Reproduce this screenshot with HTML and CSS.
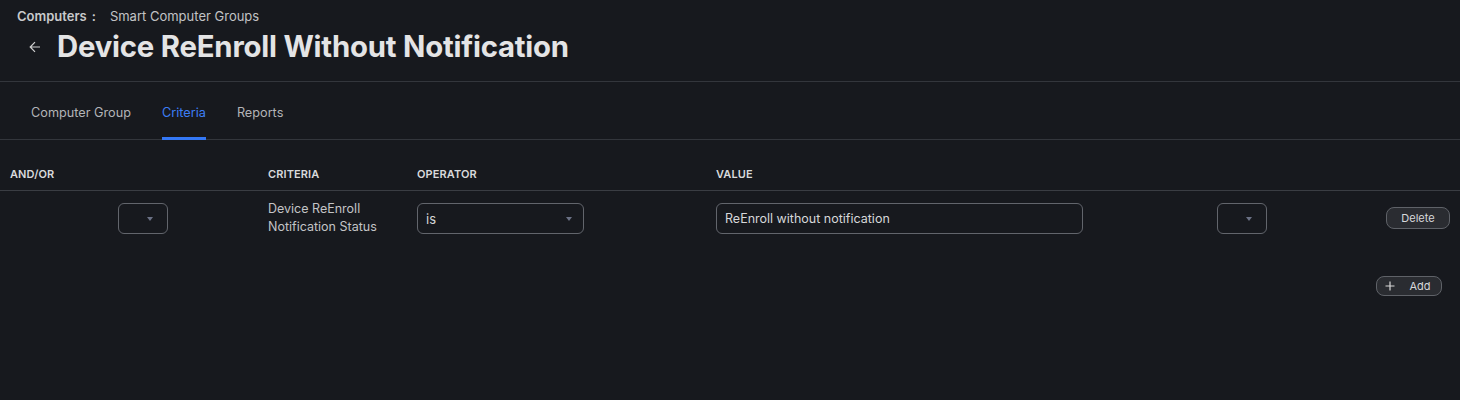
FILE: index.html
```html
<!DOCTYPE html>
<html>
<head>
<meta charset="utf-8">
<link rel="stylesheet" href="styles.css">
</head>
<body>
<header class="page-head">
  <nav class="crumbs"><span class="crumb-main">Computers</span><span class="crumb-sep">:</span><span class="crumb-sub">Smart Computer Groups</span></nav>
  <div class="title-row">
    <svg class="back" width="14" height="14" viewBox="0 0 14 14"><path d="M12 7H2.5M7 2.2L2.2 7 7 11.8" fill="none" stroke="#d0d0d0" stroke-width="1.2"/></svg>
    <h1 class="title">Device ReEnroll Without Notification</h1>
  </div>
</header>
<div class="tabs">
  <span class="tab">Computer Group</span>
  <span class="tab active">Criteria</span>
  <span class="tab">Reports</span>
</div>
<section class="table">
  <div class="thead">
    <div class="th span2">AND/OR</div>
    <div class="th">CRITERIA</div>
    <div class="th">OPERATOR</div>
    <div class="th">VALUE</div>
    <div class="th"></div>
    <div class="th"></div>
  </div>
  <div class="trow">
    <div class="td"></div>
    <div class="td"><div class="select small"><span class="caret"></span></div></div>
    <div class="td crit">Device ReEnroll<br>Notification Status</div>
    <div class="td"><div class="select op"><span class="val">is</span><span class="caret"></span></div></div>
    <div class="td"><div class="input">ReEnroll without notification</div></div>
    <div class="td"><div class="select small"><span class="caret"></span></div></div>
    <div class="td"><button class="btn del">Delete</button></div>
  </div>
  <div class="tfoot">
    <button class="btn add"><svg width="10" height="10" viewBox="0 0 10 10"><path d="M5 0.5v9M0.5 5h9" stroke="#d8d8d8" stroke-width="1.2"/></svg><span>Add</span></button>
  </div>
</section>
</body>
</html>
```
FILE: styles.css
```css
* { box-sizing: border-box; }
html, body { margin: 0; padding: 0; }
body {
  background: #17191e;
  color: #d4d5d7;
  font-family: Inter, "Noto Sans", sans-serif;
  width: 1460px;
  height: 400px;
  overflow: hidden;
}
.page-head {
  padding: 7px 0 0 17px;
  height: 82px;
  border-bottom: 1px solid #33363c;
}
.crumbs { font-size: 13px; line-height: 18px; display: flex; align-items: center; }
.crumb-main { font-weight: 600; color: #c9cacc; }
.crumb-sep { color: #c9cacc; margin: 0 14px 0 5px; font-weight: 600; }
.crumb-sub { color: #c2c3c5; }
.title-row { display: flex; align-items: center; margin-top: 9px; padding-left: 11px; }
.back { margin-right: 15px; }
.title {
  margin: 0;
  font-size: 29.3px;
  line-height: 26px;
  font-weight: 700;
  color: #e4e4e5;
  letter-spacing: -0.2px;
}
.tabs {
  display: flex;
  height: 58px;
  padding-left: 31px;
  gap: 31px;
  border-bottom: 1px solid #33363c;
}
.tab {
  font-size: 12.7px;
  color: #b3b4b7;
  display: flex;
  align-items: center;
  padding-top: 4px;
  position: relative;
}
.tab.active { color: #3d7ef5; }
.tab.active::after {
  content: "";
  position: absolute;
  left: 0; right: 0; bottom: -1px;
  height: 3px;
  background: #3478f6;
}
.table { margin-top: 17px; }
.thead, .trow {
  display: grid;
  grid-template-columns: 108px 150px 149px 299px 501px 169px 1fr;
}
.thead { height: 34px; border-bottom: 1px solid #3a3d43; }
.th {
  font-size: 11px;
  font-weight: 600;
  color: #d9dadc;
  padding-left: 10px;
  display: flex;
  align-items: center;
  letter-spacing: 0.1px;
}
.span2 { grid-column: span 2; }
.trow { padding-top: 12px; }
.td { padding-left: 10px; display: flex; align-items: flex-start; }
.crit { font-size: 12.5px; line-height: 18px; color: #c3c4c6; margin-top: -3px; display: block; }
.select, .input {
  height: 31px;
  border: 1px solid #62656c;
  border-radius: 6px;
  display: flex;
  align-items: center;
  position: relative;
}
.select.small { width: 50px; }
.select.op { width: 167px; padding-left: 8px; }
.val { font-size: 13px; color: #d6d7d9; }
.caret {
  position: absolute;
  right: 11px;
  top: 13px;
  width: 0; height: 0;
  border-left: 3.5px solid transparent;
  border-right: 3.5px solid transparent;
  border-top: 4px solid #6b7185;
}
.select.small .caret { right: 14px; }
.input {
  width: 367px;
  padding-left: 8px;
  font-size: 12.5px;
  color: #d6d7d9;
}
.btn {
  font-family: inherit;
  background: #2a2c31;
  border: 1px solid #5f6268;
  color: #d6d7d9;
  font-size: 11px;
  border-radius: 8px;
  height: 22px;
  padding: 0;
  display: flex;
  align-items: center;
  justify-content: center;
}
.del { width: 64px; margin-top: 4px; }
.tfoot {
  display: flex;
  justify-content: flex-end;
  padding-right: 18px;
  margin-top: 40px;
}
.add { width: 66px; height: 20px; gap: 14px; padding-right: 2px; }
```
